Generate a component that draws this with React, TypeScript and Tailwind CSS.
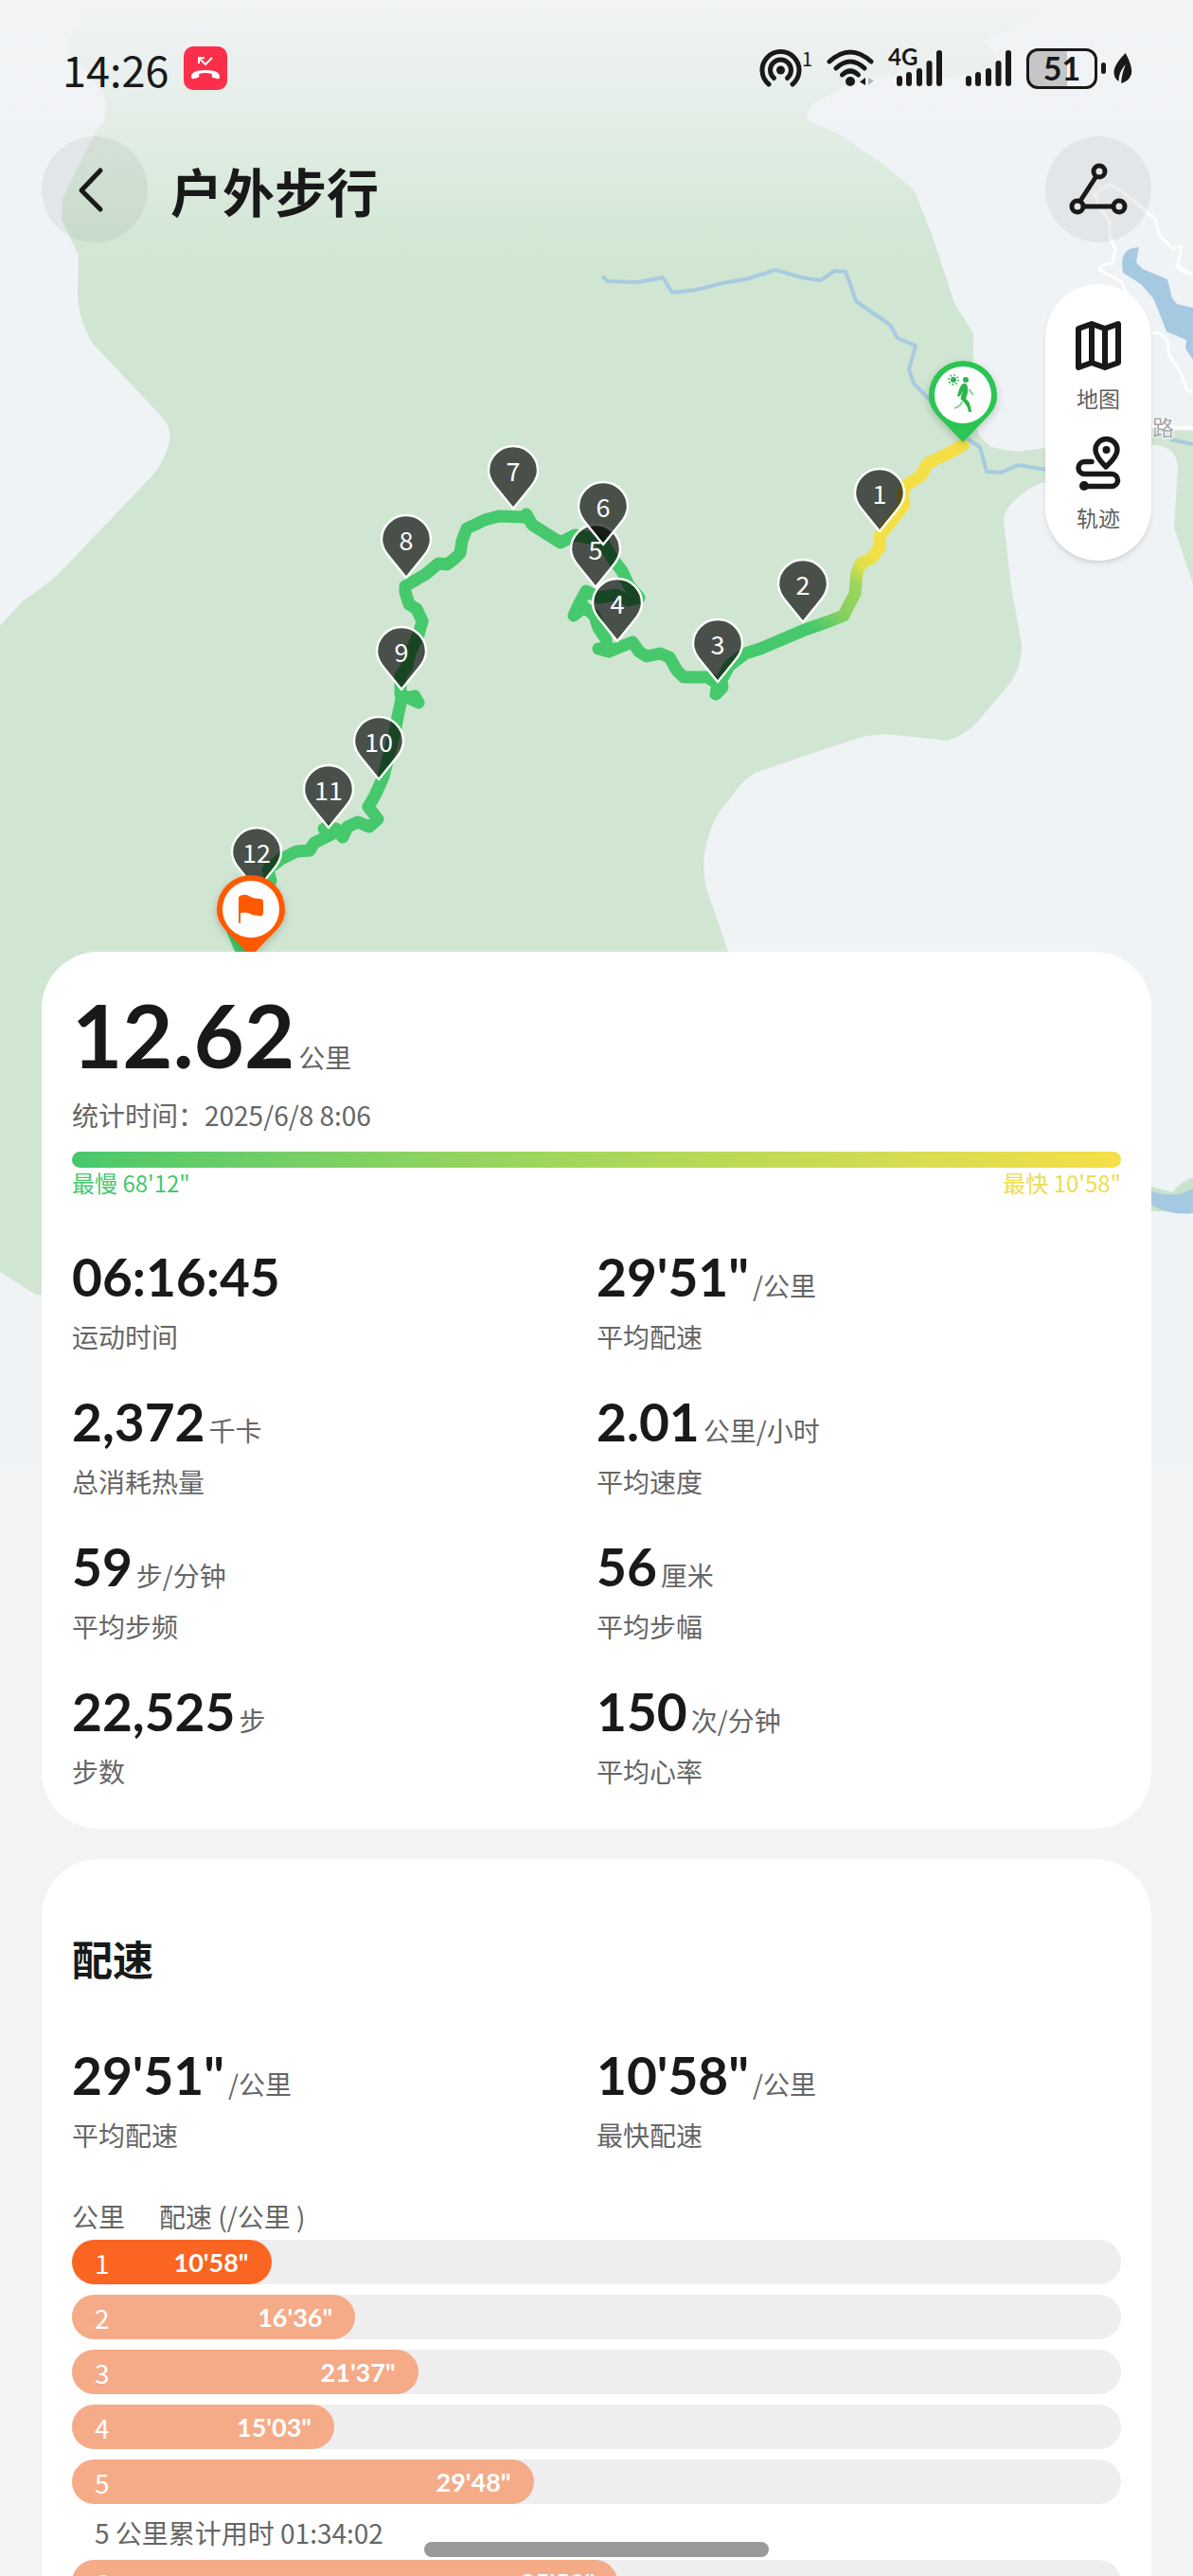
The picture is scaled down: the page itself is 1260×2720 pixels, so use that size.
import type { ReactNode } from "react";

interface StatItem {
    value: string;
    unit?: string;
    label: string;
}

interface Split {
    km: number;
    pace: string;
    percent: number; // share of the track that the bar fills
    fastest?: boolean;
    note?: string;
}

const SUMMARY: StatItem[] = [
    { value: "06:16:45", label: "运动时间" },
    { value: "29'51\"", unit: "/公里", label: "平均配速" },
    { value: "2,372", unit: "千卡", label: "总消耗热量" },
    { value: "2.01", unit: "公里/小时", label: "平均速度" },
    { value: "59", unit: "步/分钟", label: "平均步频" },
    { value: "56", unit: "厘米", label: "平均步幅" },
    { value: "22,525", unit: "步", label: "步数" },
    { value: "150", unit: "次/分钟", label: "平均心率" },
];

const PACE: StatItem[] = [
    { value: "29'51\"", unit: "/公里", label: "平均配速" },
    { value: "10'58\"", unit: "/公里", label: "最快配速" },
];

const SPLITS: Split[] = [
    { km: 1, pace: "10'58\"", percent: 19, fastest: true },
    { km: 2, pace: "16'36\"", percent: 27 },
    { km: 3, pace: "21'37\"", percent: 33 },
    { km: 4, pace: "15'03\"", percent: 25 },
    { km: 5, pace: "29'48\"", percent: 44, note: "5 公里累计用时 01:34:02" },
    { km: 6, pace: "35'50\"", percent: 52 },
];

// Tip of each kilometre pin, in draw order
const PINS = [
    { km: 12, x: 271, y: 940 },
    { km: 11, x: 347, y: 874 },
    { km: 10, x: 400, y: 823 },
    { km: 9, x: 424, y: 728 },
    { km: 8, x: 429, y: 610 },
    { km: 7, x: 542, y: 537 },
    { km: 5, x: 629, y: 620 },
    { km: 6, x: 637, y: 575 },
    { km: 4, x: 652, y: 677 },
    { km: 3, x: 758, y: 720 },
    { km: 2, x: 848, y: 657 },
    { km: 1, x: 929, y: 561 },
];

const ROUTE =
    "M1017 470 L1003 478 L980 489 L972 503 L957 512 L953 522 L955 533 L940 552 L929 566 L929 578 L921 589 L909 595 L905 605 L903 627 L895 642 L891 650 L873 657 L850 665 L803 685 L787 690 L770 703 L762 718 L763 726 L756 733 L758 722 L747 715 L722 715 L715 708 L707 694 L697 690 L683 693 L675 688 L668 678 L655 683 L643 688 L632 685 L641 683 L640 675 L632 663 L628 650 L617 641 L606 650 L612 637 L619 624 L633 631 L650 628 L664 634 L675 631 L664 618 L657 603 L647 590 L637 573 L623 568 L607 565 L592 573 L562 554 L556 543 L553 546 L527 545 L512 549 L493 558 L488 571 L486 584 L480 590 L472 596 L463 595 L450 606 L428 619 L428 625 L432 638 L440 643 L446 656 L442 670 L433 690 L430 704 L423 713 L423 733 L442 742 L438 735 L424 738 L420 757 L417 773 L410 800 L405 820 L396 840 L389 852 L399 865 L390 873 L378 868 L367 873 L362 884 L355 875 L342 875 L350 881 L332 890 L327 898 L313 899 L297 907 L283 918 L286 930 L272 948 L240 968 L253 1000 L265 1012";

function RouteMap() {
    return (
        <svg
            className="h-[1547px] w-full [grid-area:1/1]"
            viewBox="0 0 1260 1547"
            preserveAspectRatio="xMidYMin slice"
            role="img"
            aria-label="户外步行轨迹"
        >
            <defs>
                <linearGradient id="fade" x1="0" y1="0" x2="0" y2="1">
                    <stop offset="0" stopColor="#f1f3f5" />
                    <stop offset="0.25" stopColor="#f1f3f5" stopOpacity="0.8" />
                    <stop offset="1" stopColor="#f1f3f5" stopOpacity="0" />
                </linearGradient>
                <linearGradient id="pace" gradientUnits="userSpaceOnUse" x1="925" y1="585" x2="860" y2="665">
                    <stop offset="0" stopColor="#f5df47" />
                    <stop offset="0.2" stopColor="#dbdf4b" />
                    <stop offset="0.35" stopColor="#9fd65c" />
                    <stop offset="0.7" stopColor="#86d160" />
                    <stop offset="1" stopColor="#46c86c" />
                </linearGradient>
                <filter id="shadow" x="-30%" y="-30%" width="160%" height="160%">
                    <feDropShadow dx="0" dy="3" stdDeviation="4" floodOpacity="0.2" />
                </filter>
                <path id="pin" d="M0 0 L-17 -21 C-24 -29 -26 -34 -26 -40 A26 26 0 0 1 26 -40 C26 -34 24 -29 17 -21 Z" />
                <path id="bigPin" d="M0 0 L-27 -28 C-34 -36 -36 -42 -36 -50 A36 36 0 0 1 36 -50 C36 -42 34 -36 27 -28 Z" />
            </defs>

            <rect width="1260" height="1547" fill="#eff3f6" />

            {/* Woodland */}
            <path
                fill="#d0e6d2"
                d="M100 0 L72 40 L74 58 L96 80 L110 102 L113 112 L110 127 L102 137 L94 153 L66 210 L65 232 L83 270 L82 312 Q84 342 99 364 L168 437 Q183 450 178 470 Q172 490 160 503 L61 607 Q40 624 26 633 L0 660 V1343 L38 1367 L60 1370 L800 1100 L769 1005 L746 937 Q741 915 745 897 Q752 862 770 845 Q783 824 798 816 L850 798 L905 780 Q926 774 946 776 L1000 782 Q1025 775 1041 752 L1068 720 Q1080 702 1079 680 L1068 620 L1060 550 Q1060 540 1070 530 Q1084 515 1105 508 L1217 470 Q1242 470 1244 493 L1240 557 L1260 617 V455 L1217 453 L1105 473 L1073 477 L1047 472 Q1036 464 1033 457 L1027 437 L1028 352 L1008 320 L984 247 L968 207 Q966 200 961 197 L935 175 L887 142 L853 127 Q852 113 862 108 L887 93 L919 82 L963 75 L1005 83 L1050 72 L1052 60 L1039 42 L1072 27 L1128 0 Z"
            />

            {/* Roads */}
            <g fill="none" stroke="#fff" strokeWidth="3" strokeLinejoin="round">
                <path d="M1186 298 L1161 285 L1164 280 L1175 278 L1178 263 L1172 250 L1172 233 L1162 220 L1156 205 L1172 195 L1185 202 L1221 232 L1224 248 L1239 263 L1248 260 L1244 280 L1260 290" />
                <path d="M1161 285 L1185 298 L1192 315" />
                <path d="M1217 351 L1226 352 L1233 360 L1235 375 L1247 393 L1254 413 L1260 413" />
                <path d="M1217 450 L1260 452" />
                <path d="M1242 280 L1249 286 L1260 290" />
            </g>

            {/* Water */}
            <path
                fill="#a6c9e2"
                d="M1203 261 L1200 277 L1207 284 L1233 295 L1238 315 L1243 321 L1260 325 V380 L1252 368 L1253 359 L1232 350 L1225 332 L1218 315 L1205 300 L1186 288 Q1182 265 1196 262 Z"
            />
            <g fill="none" stroke="#a8cbe0" strokeWidth="4" strokeLinejoin="round">
                <path d="M636 292 L642 297 L674 298 L700 293 L710 309 L735 306 L763 299 L791 294 L819 285 L847 293 L867 296 L881 286 L893 287 L898 300 L904 318 L940 343 L948 357 L967 365 L960 390 L965 405 L982 422 L1020 462 L1035 472 L1042 498 L1057 499 L1075 491 L1105 496" />
                <path d="M1236 464 L1260 469" />
            </g>
            <path fill="#c9e3cc" d="M1200 1248 L1238 1259 Q1250 1246 1260 1243 V1279 H1200 Z" />
            <path fill="#a6c9e2" d="M1200 1252 L1216 1258 Q1240 1266 1260 1255 V1281 Q1235 1284 1216 1272 L1200 1270 Z" />
            <text x="1217" y="460" fontSize="23" fill="#a4a7aa" stroke="#fff" strokeWidth="2" paintOrder="stroke">
                路
            </text>

            <rect width="1260" height="275" fill="url(#fade)" />

            {/* Track */}
            <path d={ROUTE} fill="none" stroke="url(#pace)" strokeWidth="13" strokeLinejoin="round" strokeLinecap="round" />

            {PINS.map((pin) => (
                <g key={pin.km} transform={`translate(${pin.x} ${pin.y})`}>
                    <use href="#pin" fill="#000" fillOpacity="0.65" stroke="#fff" strokeWidth="2.4" strokeLinejoin="round" />
                    <text y="-29" textAnchor="middle" fontSize="27" fill="#fff">
                        {pin.km}
                    </text>
                </g>
            ))}

            {/* Start */}
            <g transform="translate(1017 467)">
                <use href="#bigPin" fill="#2bc552" filter="url(#shadow)" />
                <circle cy="-50" r="30" fill="#fff" />
                <g fill="#2bb54a">
                    <circle cx="-10" cy="-66" r="3" />
                    <circle
                        cx="-10"
                        cy="-66"
                        r="5"
                        fill="none"
                        stroke="#2bb54a"
                        strokeWidth="2"
                        strokeDasharray="1.4 2.5"
                    />
                    <circle cx="3" cy="-66" r="3" />
                    <path d="M0 -62 Q4 -63 5 -58 L5 -52 L3 -46 Q8 -43 9 -32 L6 -32 Q5 -40 -2 -45 Q-3 -47 0 -54 L-3 -49 L-6 -48 Q-4 -59 0 -62 Z" />
                    <path fill="none" stroke="#8ad49a" strokeWidth="2" d="M6 -56 L11 -50 M-1 -43 Q-2 -38 -9 -36" />
                </g>
            </g>

            {/* Finish */}
            <g transform="translate(265 1010)">
                <use href="#bigPin" fill="#ff5a00" filter="url(#shadow)" />
                <circle cy="-50" r="30" fill="#fff" />
                <path
                    fill="#ff5a00"
                    d="M-13 -63 Q-9 -66 -4 -65 Q2 -61 9 -61 Q13 -61 13 -58 L13 -45 Q12 -42 8 -43 Q2 -43 -3 -46 Q-7 -47 -11 -46 L-11 -36 Q-12 -34 -13 -36 Z"
                />
            </g>
        </svg>
    );
}

function SignalBars() {
    return (
        <svg className="h-10 w-[50px]" viewBox="0 0 50 40" stroke="#191919" strokeWidth="6" strokeLinecap="round" aria-hidden="true">
            <path d="M4 31V36M14 27V36M25 23V36M35.500 15V36M46 4V36" />
        </svg>
    );
}

function StatusBar() {
    return (
        <div className="flex h-36 items-center justify-between pr-16 pl-[66px]">
            <div className="flex items-center gap-4">
                <span className="text-[45px] leading-none text-[#191919]">14:26</span>
                <svg className="size-[46px]" viewBox="0 0 46 46" aria-hidden="true">
                    <rect width="46" height="46" rx="10" fill="#fb2f49" />
                    <path d="M16 18V12H22M16 12L23 19L30 12" fill="none" stroke="#fff" strokeWidth="2" />
                    <path d="M8 32Q8 25 23 25T38 32Q38 35 35 34L31 33Q29 32 30 29Q23 27 16 29Q17 32 15 33L11 34Q8 35 8 32Z" fill="#fff" />
                </svg>
            </div>
            <div className="flex items-center gap-[15px]">
                <div className="flex items-start">
                    <svg className="h-10 w-[45px]" viewBox="0 0 45 40" fill="none" stroke="#191919" strokeWidth="5" strokeLinecap="round" aria-hidden="true">
                        <path d="M10 37A19.500 19.500 0 1 1 35 37" />
                        <path d="M15.500 30.500A11 11 0 1 1 29.500 30.500" />
                        <circle cx="22.500" cy="22" r="4.500" fill="#191919" stroke="none" />
                    </svg>
                    <span className="text-xl leading-5 text-[#191919]">1</span>
                </div>
                <svg className="h-10 w-[50px]" viewBox="0 0 50 40" fill="none" stroke="#191919" strokeWidth="5" strokeLinecap="round" aria-hidden="true">
                    <path d="M3 13Q25 -7 47 13M10 20Q25 6 40 20M16.500 27Q25 19 33.500 27" />
                    <circle cx="25" cy="34" r="5" fill="#191919" stroke="none" />
                    <path d="M41 30V38L35 34.500Z" fill="#191919" stroke="none" />
                    <path d="M44 30V38L50 33Z" fill="#b5b7b8" stroke="none" />
                </svg>
                <div className="relative mr-2 pl-2">
                    <span className="absolute -top-1 left-0 font-['Lato','Noto_Sans_CJK_SC',sans-serif] text-2xl leading-6 font-bold text-[#191919]">4G</span>
                    <SignalBars />
                </div>
                <SignalBars />
                <div className="flex items-center gap-1">
                    <div className="flex h-[43px] w-[75px] items-center justify-center rounded-xl border-[3px] border-[#191919] bg-linear-to-r from-[#c5c6c8] from-58% to-transparent to-58% font-['Lato','Noto_Sans_CJK_SC',sans-serif] text-[34px] leading-none font-bold text-[#191919]">
                        51
                    </div>
                    <span className="h-3 w-[5px] rounded-full bg-[#191919]" />
                    <svg className="ml-1 h-8 w-5" viewBox="0 0 22 32" preserveAspectRatio="none" fill="#191919" aria-hidden="true">
                        <path d="M14 0Q24 17 20 24Q17 30 9 32Q9 24 14 12Q6 20 6 30Q-1 25 1 17Q3 10 14 0Z" />
                    </svg>
                </div>
            </div>
        </div>
    );
}

function TitleBar() {
    return (
        <div className="flex items-center px-11">
            <button aria-label="返回" className="flex size-28 items-center justify-center rounded-full bg-black/5">
                <svg className="h-14 w-10" viewBox="0 0 40 56" fill="none" stroke="#191919" strokeWidth="5" strokeLinecap="round" strokeLinejoin="round">
                    <path d="M26 8L6 29L26 49" />
                </svg>
            </button>
            <h1 className="ml-6 flex-1 text-[55px] leading-none font-bold text-[#191919]">户外步行</h1>
            <button aria-label="分享" className="flex size-28 items-center justify-center rounded-full bg-black/5">
                <svg className="size-16" viewBox="0 0 64 64" fill="none" stroke="#191919" strokeWidth="5">
                    <path d="M30 18L13 44M17 50H47" />
                    <circle cx="33" cy="13" r="6" />
                    <circle cx="10" cy="50" r="6" />
                    <circle cx="54" cy="50" r="6" />
                </svg>
            </button>
        </div>
    );
}

function MapTools() {
    return (
        <div className="mt-11 mr-11 flex w-28 flex-col items-center gap-[26px] self-end rounded-full bg-white pt-[38px] pb-8 text-[23px] leading-7 text-[#5f5f5f] shadow-md">
            <button className="flex flex-col items-center gap-3.5">
                <svg className="h-[54px] w-12" viewBox="0 0 48 54" fill="none" stroke="#191919" strokeWidth="6" strokeLinejoin="round" aria-hidden="true">
                    <path d="M3 9L17 4L31 9L45 4V45L31 50L17 45L3 50ZM17 4V45M31 9V50" />
                </svg>
                地图
            </button>
            <button className="flex flex-col items-center gap-3.5">
                <svg className="h-[58px] w-12" viewBox="0 0 48 58" fill="none" stroke="#191919" strokeWidth="5.500" strokeLinecap="round" strokeLinejoin="round" aria-hidden="true">
                    <path d="M17 27.500H9.500A6.500 6.500 0 0 0 9.500 40.500H38A6.500 6.500 0 0 1 38 53.500H9" />
                    <path d="M32 33Q21 22 21 15A11.500 11.500 0 0 1 44 15Q44 22 32 33Z" />
                    <circle cx="32.500" cy="15" r="4" fill="#191919" stroke="none" />
                    <circle cx="9" cy="53" r="5" fill="#191919" stroke="none" />
                </svg>
                轨迹
            </button>
        </div>
    );
}

function Card({ children }: { children: ReactNode }) {
    return <section className="mx-11 rounded-[60px] bg-white px-8 pb-[43px]">{children}</section>;
}

function StatGrid({ items }: { items: StatItem[] }) {
    return (
        <dl className="grid grid-cols-2 gap-y-[37px]">
            {items.map((item) => (
                <div key={item.label} className="flex flex-col-reverse gap-2.5">
                    <dt className="text-[28px] leading-9 text-[#666]">{item.label}</dt>
                    <dd className="flex items-baseline gap-1 font-['Lato','Noto_Sans_CJK_SC',sans-serif] text-[55px] leading-[70px] font-bold text-[#191919]">
                        {item.value}
                        {item.unit && <span className="font-['Noto_Sans_CJK_SC',sans-serif] text-[28px] leading-9 font-normal text-[#666]">{item.unit}</span>}
                    </dd>
                </div>
            ))}
        </dl>
    );
}

function SplitRow({ split }: { split: Split }) {
    return (
        <li>
            <div className="mb-[11px] rounded-full bg-[#eee]">
                <div
                    className={`flex h-[47px] items-center justify-between rounded-full px-6 text-[28px] leading-none text-white ${split.fastest ? "bg-[#fb6522]" : "bg-[#f5ab88]"}`}
                    style={{ width: `${split.percent}%` }}
                >
                    <span>{split.km}</span>
                    <span className="font-['Lato','Noto_Sans_CJK_SC',sans-serif] text-[27px] font-bold">{split.pace}</span>
                </div>
            </div>
            {split.note && <p className="mt-3 mb-[11px] px-6 text-[28px] leading-9 text-[#666]">{split.note}</p>}
        </li>
    );
}

export default function App() {
    return (
        <div className="relative h-screen overflow-hidden bg-[#f1f3f5] font-['Noto_Sans_CJK_SC',sans-serif]">
            <main className="h-full overflow-y-auto [scrollbar-width:none]">
                <div className="grid">
                    <RouteMap />
                    <div className="flex flex-col [grid-area:1/1]">
                        <header className="flex h-[1005px] flex-col">
                            <StatusBar />
                            <TitleBar />
                            <MapTools />
                        </header>

                        <Card>
                            <p className="flex items-baseline gap-1 pt-8 font-['Lato','Noto_Sans_CJK_SC',sans-serif] text-[92px] leading-[112px] font-bold text-[#191919]">
                                12.62
                                <span className="text-[28px] leading-9 font-normal text-[#666]">公里</span>
                            </p>
                            <p className="mt-2.5 text-[28px] leading-9 text-[#666]">统计时间：2025/6/8 8:06</p>
                            <div className="mt-[21px] h-[17px] rounded-full bg-linear-to-r from-[#46c86c] via-[#a6d759] to-[#f5df47]" />
                            <div className="mb-12 flex justify-between text-2xl">
                                <span className="text-[#46c86c]">最慢 68'12"</span>
                                <span className="text-[#eedc4f]">最快 10'58"</span>
                            </div>
                            <StatGrid items={SUMMARY} />
                        </Card>

                        <div className="h-8" />

                        <Card>
                            <h2 className="mb-[59px] pt-[74px] text-[43px] leading-[60px] font-bold text-[#191919]">配速</h2>
                            <StatGrid items={PACE} />
                            <div className="mt-[50px] mb-[7px] flex gap-9 text-[28px] leading-9 text-[#666]">
                                <span>公里</span>
                                <span>配速 (/公里 )</span>
                            </div>
                            <ol>
                                {SPLITS.map((split) => (
                                    <SplitRow key={split.km} split={split} />
                                ))}
                            </ol>
                        </Card>
                    </div>
                </div>
            </main>

            {/* Home indicator */}
            <div className="absolute bottom-5 left-1/2 h-4 w-[364px] -translate-x-1/2 rounded-full bg-[#999]" />
        </div>
    );
}
